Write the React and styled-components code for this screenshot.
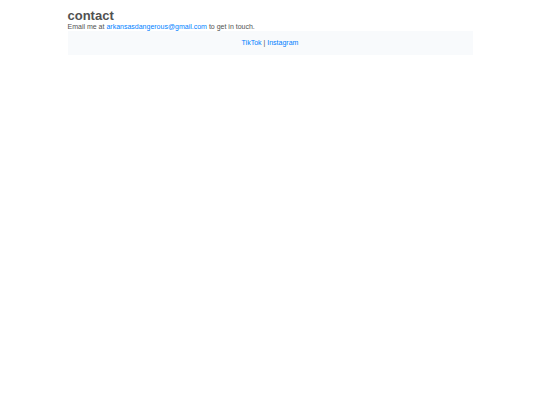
import React from "react";
import styled, { createGlobalStyle } from "styled-components";

const GlobalStyle = createGlobalStyle`
  * { box-sizing: border-box; }
  body {
    margin: 0;
    background: #fff;
    color: #515151;
    font-family: "Liberation Sans", Arial, sans-serif;
    font-size: 7px;
    line-height: 8px;
  }
`;

const Page = styled.div`
  width: 75%;
  margin: 0 auto;
  padding-top: 8px;
`;

const Title = styled.h1`
  margin: 0;
  font-size: 13px;
  line-height: 15px;
  font-weight: 700;
`;

const Text = styled.p`
  margin: 0;
`;

const Link = styled.a`
  color: #007fff;
  text-decoration: none;
`;

const Footer = styled.footer`
  padding: 8px;
  background: #f8fafc;
  text-align: center;
`;

export default function App() {
  return (
    <>
      <GlobalStyle />
      <Page>
        <main>
          <Title>contact</Title>
          <Text>
            Email me at{" "}
            <Link href="mailto:arkansasdangerous@gmail.com">arkansasdangerous@gmail.com</Link>{" "}
            to get in touch.
          </Text>
        </main>
        <Footer>
          <Link href="#tiktok">TikTok</Link> | <Link href="#instagram">Instagram</Link>
        </Footer>
      </Page>
    </>
  );
}
